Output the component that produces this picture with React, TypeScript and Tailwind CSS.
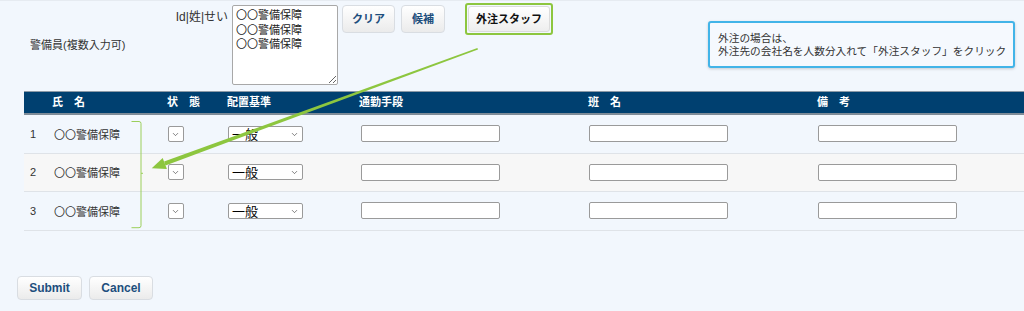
import { ChevronDown } from 'lucide-react';

const rows = [1, 2, 3];

const cols = 'grid grid-cols-[26px_115px_60px_133px_229px_229px_208px]';

const btn =
  'rounded-[4px] border border-[#d9dde2] bg-[linear-gradient(#ffffff,#ebebeb)] font-bold text-[#1d4e7d]';

const jp = "font-['Noto_Sans_CJK_JP',sans-serif]";

function MiniSelect({ wide }: { wide?: boolean }) {
  return (
    <div
      className={
        'relative flex h-[16px] items-center rounded-[2px] border border-[#9a9a9a] bg-white ' +
        (wide ? 'w-[75px]' : 'w-[16px]')
      }
    >
      {wide && <span className={jp + ' pl-[3px] text-[13px] leading-[14px] text-black'}>一般</span>}
      <ChevronDown size={9} strokeWidth={1.6} className="absolute right-[3px] top-[3px] text-[#333]" />
    </div>
  );
}

function TextBox() {
  return <input className="h-[17px] w-[139px] rounded-[2px] border border-[#9a9a9a] bg-white outline-none" />;
}

export default function App() {
  return (
    <div className="relative h-[311px] w-[1024px] overflow-hidden border-t border-[#e6ebf1] bg-[#f2f7fd] font-['Liberation_Sans','Noto_Sans_CJK_JP',sans-serif] text-[11px] text-[#333]">
      <div className="flex h-[90px] pt-[4px]">
        <div className="flex h-[80px] w-[146px] items-center pl-[30px] leading-[14px]">警備員(複数入力可)</div>
        <div className="w-[86px] pr-[4px] pt-[5px] text-right text-[12px] leading-[14px]">Id|姓|せい</div>
        <textarea
          className={
            jp +
            ' h-[80px] w-[106px] rounded-[2px] border border-[#a8a8a8] bg-white px-[3px] pt-[1px] text-[11px] leading-[14.6px] text-[#222] outline-none'
          }
          defaultValue={'〇〇警備保障\n〇〇警備保障\n〇〇警備保障'}
        />
        <button className={btn + ' ml-[4px] h-[28px] w-[53px] text-[11px]'}>クリア</button>
        <button className={btn + ' ml-[6px] h-[28px] w-[44px] text-[11px]'}>候補</button>
        <div className="ml-[20px] -mt-[2px] h-[32px] rounded-[3px] border-2 border-[#8dc63f] p-[1px]">
          <button className="h-[26px] w-[82px] rounded-[3px] border border-[#dcdcdc] bg-[linear-gradient(#ffffff,#eeeeee)] text-[11px] font-bold text-[#111]">
            外注スタッフ
          </button>
        </div>
        <div
          className={
            jp +
            ' ml-[155px] mt-[16px] flex h-[47px] w-[307px] flex-col gap-[1px] whitespace-nowrap rounded-[3px] border-2 border-[#42b4e8] bg-[#f5f9fe] px-[8px] pt-[9px] text-[10.7px] leading-[12px] text-[#333] shadow-[0_1px_3px_rgba(0,0,0,0.18)]'
          }
        >
          <div>外注の場合は、</div>
          <div>外注先の会社名を人数分入れて「外注スタッフ」をクリック</div>
        </div>
      </div>

      <div className="ml-[24px] w-[1000px]">
        <div className={cols + ' h-[24px] items-center border-t border-b-2 border-t-[#8b99a6] border-b-[#7f8c98] bg-[#004070] font-bold text-white'}>
          <div />
          <div className="pl-[2px]">氏　名</div>
          <div className="pl-[2px]">状　態</div>
          <div className="pl-[2px]">配置基準</div>
          <div className="pl-[1px]">通勤手段</div>
          <div className="pl-[1px]">班　名</div>
          <div className="pl-[1px]">備　考</div>
        </div>
        {rows.map((n) => (
          <div
            key={n}
            className={
              cols +
              ' h-[38.5px] items-center border-b border-[#dfe3e8] ' +
              (n === 2 ? 'bg-[#f7f7f7]' : 'bg-[#f2f7fd]')
            }
          >
            <div className="pl-[6px]">{n}</div>
            <div className={jp + ' pl-[4px]'}>〇〇警備保障</div>
            <div className="pl-[3px]">
              <MiniSelect />
            </div>
            <div className="pl-[3px]">
              <MiniSelect wide />
            </div>
            <div className="pl-[3px]">
              <TextBox />
            </div>
            <div className="pl-[2px]">
              <TextBox />
            </div>
            <div className="pl-[2px]">
              <TextBox />
            </div>
          </div>
        ))}
      </div>

      <div className="ml-[17px] mt-[45px] flex gap-[7px]">
        <button className={btn + ' h-[24px] w-[65px] text-[12px]'}>Submit</button>
        <button className={btn + ' h-[24px] w-[64px] text-[12px]'}>Cancel</button>
      </div>

      {/* callout arrow + bracket drawn over the form */}
      <svg className="pointer-events-none absolute left-0 top-0" width="1024" height="311">
        <path
          d="M131.5 120.5 H139 Q141 120.5 141 122.5 V224.7 Q141 226.7 139 226.7 H131.5 M141 172.3 H143"
          fill="none"
          stroke="#9ccf5b"
          strokeWidth="1"
        />
        <polygon points="478,48.4 477.4,47 164.1,160.6 165.5,164.4" fill="#8dc63f" />
        <polygon points="151.7,167.3 166.9,168.1 162.7,156.9" fill="#8dc63f" />
      </svg>
    </div>
  );
}
